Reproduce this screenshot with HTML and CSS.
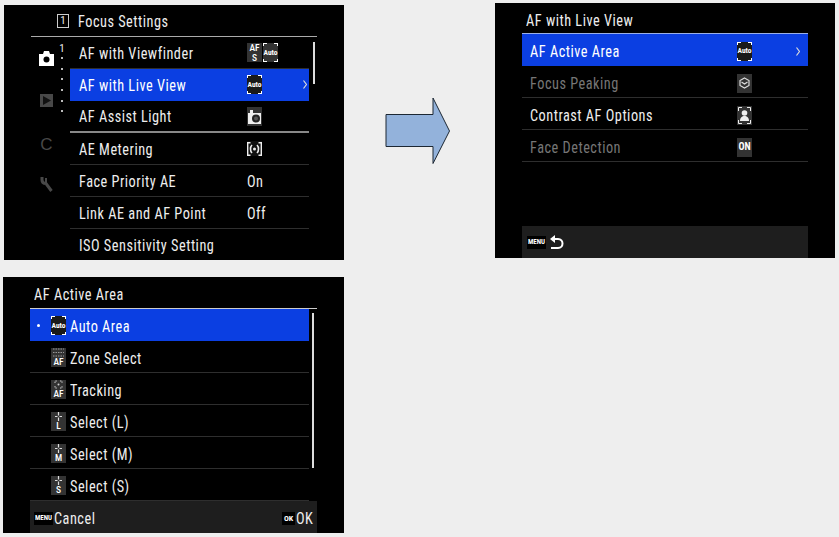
FILE: index.html
```html
<!DOCTYPE html>
<html lang="en">
<head>
  <meta charset="UTF-8" />
  <title>AF with Live View menus</title>
  <link rel="stylesheet" href="styles.css">
</head>
<body>
  <div class="sheet">

    <!-- Focus Settings -->
    <section class="screen screen-focus">
      <div class="head head-focus">
        <span class="page-box">1</span>
        <span class="tx">Focus Settings</span>
      </div>
      <div class="main">
        <div class="tabs">
          <div class="tab">
            <svg width="15" height="15" viewBox="0 0 15 15"><path d="M0 3h4l1-3h5l1 3h4v12H0z" fill="#fff"/><circle cx="7.500" cy="8.500" r="3" fill="#000"/></svg>
          </div>
          <div class="tab">
            <svg width="13" height="13" viewBox="0 0 13 13"><rect width="13" height="13" fill="#484848"/><path d="M3 2l8 4.500-8 4.500z" fill="#111"/></svg>
          </div>
          <div class="tab tab-letter">C</div>
          <div class="tab">
            <svg width="13" height="15" viewBox="0 0 13 15" fill="none" stroke="#484848"><path d="M2 0v3c0 2.500 2 3.500 4 3.500l5.500 7.500" stroke-width="3"/><path d="M6 1v5" stroke-width="2"/></svg>
          </div>
        </div>
        <div class="pager">
          <span class="pager-num">1</span>
          <i></i><i></i><i></i><i></i><i></i><i></i>
        </div>
        <div class="list">
          <div class="row">
            <span class="name tx">AF with Viewfinder</span>
            <span class="value">
              <span class="ico ico-stack"><b>AF</b><b>S</b></span>
              <span class="ico ico-auto">Auto</span>
            </span>
          </div>
          <div class="row row-on">
            <span class="name tx">AF with Live View</span>
            <span class="value"><span class="ico ico-auto ico-dark">Auto</span></span>
            <svg class="chev" width="4" height="9" viewBox="0 0 4 9"><path d="M.5.500l3 4-3 4" fill="none" stroke="#ddd" stroke-width="1.200"/></svg>
          </div>
          <div class="row row-thick">
            <span class="name tx">AF Assist Light</span>
            <span class="value">
              <span class="ico">
                <svg width="15" height="17" viewBox="0 0 15 17"><path d="M1 5h2V2h3v3h8v11H1z" fill="#eee"/><circle cx="9" cy="10.500" r="4" fill="#222"/><circle cx="9" cy="10.500" r="2" fill="#555"/></svg>
              </span>
            </span>
          </div>
          <div class="row">
            <span class="name tx">AE Metering</span>
            <span class="value">
              <span class="ico ico-plain">
                <svg width="15" height="14" viewBox="0 0 15 14" fill="none" stroke="#eee" stroke-width="1.400"><path d="M3.500.7H.7v12.600h2.800M11.500.7h2.800v12.600h-2.800"/><path d="M5 3c-2 2-2 6 0 8M10 3c2 2 2 6 0 8" stroke-width="1.600"/><circle cx="7.500" cy="7" r="1.500" fill="#eee" stroke="none"/></svg>
              </span>
            </span>
          </div>
          <div class="row">
            <span class="name tx">Face Priority AE</span>
            <span class="value"><span class="tx">On</span></span>
          </div>
          <div class="row">
            <span class="name tx">Link AE and AF Point</span>
            <span class="value"><span class="tx">Off</span></span>
          </div>
          <div class="row">
            <span class="name tx">ISO Sensitivity Setting</span>
          </div>
        </div>
        <div class="scroll scroll-focus"></div>
      </div>
    </section>

    <div class="arrow">
      <svg width="66" height="68" viewBox="0 0 66 68"><path d="M1 17.500h47V1l16.500 33L48 66.500V49.500H1z" fill="#93b2db" stroke="#1c2733"/></svg>
    </div>

    <!-- AF with Live View -->
    <section class="screen screen-live">
      <div class="head head-live"><span class="tx">AF with Live View</span></div>
      <div class="list list-live">
        <div class="row row-on">
          <span class="name tx">AF Active Area</span>
          <span class="value"><span class="ico ico-auto ico-dark">Auto</span></span>
          <svg class="chev" width="4" height="9" viewBox="0 0 4 9"><path d="M.5.500l3 4-3 4" fill="none" stroke="#ddd" stroke-width="1.200"/></svg>
        </div>
        <div class="row row-off">
          <span class="name tx">Focus Peaking</span>
          <span class="value">
            <span class="ico">
              <svg width="11" height="12" viewBox="0 0 11 12" fill="none" stroke="#ddd" stroke-width="1.200"><path d="M5.500 1l4.500 2.500v5L5.500 11 1 8.500v-5z"/><path d="M2.500 5l3 2 3-2"/></svg>
            </span>
          </span>
        </div>
        <div class="row">
          <span class="name tx">Contrast AF Options</span>
          <span class="value">
            <span class="ico">
              <svg width="15" height="19" viewBox="0 0 15 19" fill="none" stroke="#eee"><path d="M1.500 5V1.500H5M10 1.500h3.500V5M1.500 14v3.500H5M10 17.500h3.500V14"/><circle cx="7.500" cy="7" r="2.800" fill="#eee" stroke="none"/><path d="M3 15c0-3.500 2-5 4.500-5s4.500 1.500 4.500 5z" fill="#eee" stroke="none"/></svg>
            </span>
          </span>
        </div>
        <div class="row row-off">
          <span class="name tx">Face Detection</span>
          <span class="value"><span class="ico ico-on">ON</span></span>
        </div>
      </div>
      <div class="foot foot-live">
        <span class="badge">MENU</span>
        <svg width="14" height="15" viewBox="0 0 14 15" fill="none" stroke="#fff" stroke-width="2"><path d="M4 4h4c6 0 6 9 0 9H1"/><path d="M5 0v8L0 4z" fill="#fff" stroke="none"/></svg>
      </div>
    </section>

    <!-- AF Active Area -->
    <section class="screen screen-area">
      <div class="head head-area"><span class="tx">AF Active Area</span></div>
      <div class="main">
        <div class="list list-area">
          <div class="row row-on">
            <i class="pick"></i>
            <span class="ico ico-auto ico-dark">Auto</span>
            <span class="name tx">Auto Area</span>
          </div>
          <div class="row">
            <span class="ico ico-stack ico-af">
              <svg width="11" height="9" viewBox="0 0 11 9" fill="none" stroke="#999" stroke-dasharray="1.500 1"><path d="M0 1h11M0 4.500h11M0 8h11"/></svg>
              <b>AF</b>
            </span>
            <span class="name tx">Zone Select</span>
          </div>
          <div class="row">
            <span class="ico ico-stack ico-af">
              <svg width="11" height="9" viewBox="0 0 11 9" fill="none" stroke="#ccc"><path d="M2 3V1h2M7 1h2v2M2 6v2h2M7 8h2V6" stroke-dasharray="1 .6"/><circle cx="5.500" cy="4.500" r="1" fill="#ccc" stroke="none"/></svg>
              <b>AF</b>
            </span>
            <span class="name tx">Tracking</span>
          </div>
          <div class="row">
            <span class="ico ico-stack ico-af">
              <svg width="9" height="9" viewBox="0 0 9 9" fill="none" stroke="#ddd" stroke-width="1.200"><path d="M4.500 0v3.500M4.500 5.500V9M1 4.500h2.500M5.500 4.500H8"/></svg>
              <b>L</b>
            </span>
            <span class="name tx">Select (L)</span>
          </div>
          <div class="row">
            <span class="ico ico-stack ico-af">
              <svg width="9" height="9" viewBox="0 0 9 9" fill="none" stroke="#ddd" stroke-width="1.200"><path d="M4.500 0v3.500M4.500 5.500V9M1 4.500h2.500M5.500 4.500H8"/></svg>
              <b>M</b>
            </span>
            <span class="name tx">Select (M)</span>
          </div>
          <div class="row">
            <span class="ico ico-stack ico-af">
              <svg width="9" height="9" viewBox="0 0 9 9" fill="none" stroke="#ddd" stroke-width="1.200"><path d="M4.500 0v3.500M4.500 5.500V9M1 4.500h2.500M5.500 4.500H8"/></svg>
              <b>S</b>
            </span>
            <span class="name tx">Select (S)</span>
          </div>
        </div>
        <div class="scroll scroll-area"></div>
      </div>
      <div class="foot foot-area">
        <span class="badge">MENU</span>
        <span class="foot-text tx">Cancel</span>
        <span class="badge badge-ok">OK</span>
        <span class="tx">OK</span>
      </div>
    </section>

  </div>
</body>
</html>
```

FILE: styles.css
```css
* {
  box-sizing: border-box;
  margin: 0;
  padding: 0;
}

body {
  background: #eeeeee;
  color: #eee;
  font-family: Roboto, "Liberation Sans", sans-serif;
  font-stretch: 75%;
  font-size: 17px;
  letter-spacing: 0.6px;
  overflow: hidden;
}

/* the camera font is taller and narrower than Roboto Condensed */
.tx {
  display: inline-block;
  transform: scaleX(0.84);
  transform-origin: left center;
}

.sheet {
  display: grid;
  grid-template-columns: 344px 151px 340px;
  grid-template-rows: 260px auto;
}

.screen {
  background: #000;
  overflow: hidden;
  display: flex;
  flex-direction: column;
}

.screen-focus {
  width: 340px;
  height: 255px;
  margin: 5px 0 0 4px;
}

.screen-live {
  width: 340px;
  height: 255px;
  margin-top: 3px;
  padding-left: 27px;
}

.screen-area {
  width: 341px;
  height: 256px;
  margin: 17px 0 0 3px;
  padding-left: 27px;
  grid-column: 1;
}

/* headers */
.head {
  display: flex;
  align-items: center;
  width: 286px;
  flex: none;
  border-bottom: 1px solid #aaa;
}

.head-focus {
  height: 32px;
  margin-left: 27px;
  padding: 0 0 0 26px;
  gap: 9px;
}

.head-live {
  height: 31px;
  padding: 4px 0 0 4px;
  border-bottom-color: #9ab0e8;
}

.head-area {
  height: 32px;
  padding: 2px 0 0 4px;
  border-bottom-color: #ccc;
  width: 287px;
}

.page-box {
  width: 12px;
  height: 14px;
  border: 1px solid #ccc;
  font-size: 11px;
  letter-spacing: 0;
  display: flex;
  align-items: center;
  justify-content: center;
}

/* left rail */
.main {
  display: flex;
  flex: none;
}

.tabs {
  width: 50px;
  padding-left: 35px;
  flex: none;
}

.tab {
  width: 15px;
  height: 42px;
  display: flex;
  align-items: center;
  justify-content: center;
}

.tab-letter {
  color: #484848;
  font-family: "Liberation Sans", sans-serif;
  font-size: 17px;
  letter-spacing: 0;
  padding-top: 5px;
}

.pager {
  width: 4px;
  margin-left: 6px;
  margin-right: 6px;
  padding-top: 6px;
  display: flex;
  flex-direction: column;
  align-items: center;
  flex: none;
}

.pager-num {
  font-size: 11px;
  line-height: 11px;
  letter-spacing: 0;
  margin-bottom: 3px;
}

.pager i {
  width: 2px;
  height: 2px;
  background: #bbb;
  margin-bottom: 8.7px;
  flex: none;
}

/* rows */
.list {
  width: 239px;
  flex: none;
}

.list-live {
  width: 286px;
  flex: none;
}

.list-area {
  width: 279px;
}

.row {
  height: 32px;
  display: flex;
  align-items: center;
  padding: 0 0 0 9px;
  border-bottom: 1px solid #2e2e2e;
  white-space: nowrap;
}

.row-on {
  background: #0b3fe2;
  color: #fff;
  border-bottom-color: #0b3fe2;
}

.row-thick {
  border-bottom: 2px solid #888;
}

.row-off {
  color: #767676;
}

.name {
  width: 168px;
  flex: none;
}

.value {
  flex: 1;
  display: flex;
  align-items: center;
  gap: 1px;
}

.chev {
  flex: none;
  margin-right: 2px;
}

.list-live .row {
  padding: 3px 0 0 8px;
}

.list-live .name {
  width: 207px;
}

.list-live .chev {
  margin-right: 8px;
}

.list-area .row {
  padding: 2px 0 0 21px;
  gap: 4px;
}

.list-area .row-on {
  padding-left: 7px;
}

.list-area .name {
  width: auto;
}

.pick {
  width: 3px;
  height: 3px;
  border-radius: 50%;
  background: #fff;
  margin-right: 7px;
}

.scroll {
  width: 2px;
  background: #ddd;
  margin-left: 4px;
  flex: none;
}

.scroll-focus {
  height: 42px;
  margin-top: 5px;
}

.scroll-area {
  height: 155px;
  margin-top: 4px;
  margin-left: 3px;
}

/* small setting icons */
.ico {
  width: 15px;
  height: 19px;
  background: #333;
  color: #fff;
  flex: none;
  display: flex;
  align-items: center;
  justify-content: center;
  font-size: 7.5px;
  font-weight: bold;
  letter-spacing: 0;
  line-height: 1;
}

.ico-plain {
  background: #111;
  height: 15px;
}

.ico-auto {
  background:
    linear-gradient(#fff, #fff) left top / 4px 1px no-repeat,
    linear-gradient(#fff, #fff) left top / 1px 3px no-repeat,
    linear-gradient(#fff, #fff) right top / 4px 1px no-repeat,
    linear-gradient(#fff, #fff) right top / 1px 3px no-repeat,
    linear-gradient(#fff, #fff) left bottom / 4px 1px no-repeat,
    linear-gradient(#fff, #fff) left bottom / 1px 3px no-repeat,
    linear-gradient(#fff, #fff) right bottom / 4px 1px no-repeat,
    linear-gradient(#fff, #fff) right bottom / 1px 3px no-repeat,
    #333;
}

.ico-dark {
  background-color: #1a1a1a;
}

.ico-stack {
  flex-direction: column;
  font-size: 9.5px;
  line-height: 9.5px;
}

.ico-stack b {
  display: block;
  font-weight: 500;
}

.ico-on {
  font-size: 10px;
}

/* bottom bars */
.foot {
  height: 32px;
  margin-top: auto;
  width: 286px;
  flex: none;
  background: #1e1e1e;
  display: flex;
  align-items: center;
  padding-left: 4px;
}

.foot-area {
  width: 287px;
  padding-top: 2px;
}

.foot-live {
  padding-left: 5px;
  gap: 4px;
}

.foot-text {
  flex: 1;
  margin-left: 1px;
}

.badge {
  background: #000;
  color: #fff;
  font-size: 7px;
  font-weight: bold;
  letter-spacing: 0;
  height: 13px;
  padding: 0 1px;
  display: flex;
  align-items: center;
}

.badge-ok {
  padding: 0 2px;
  font-size: 8px;
  margin-right: 1px;
}

.arrow {
  padding: 97px 0 0 41px;
}
```
